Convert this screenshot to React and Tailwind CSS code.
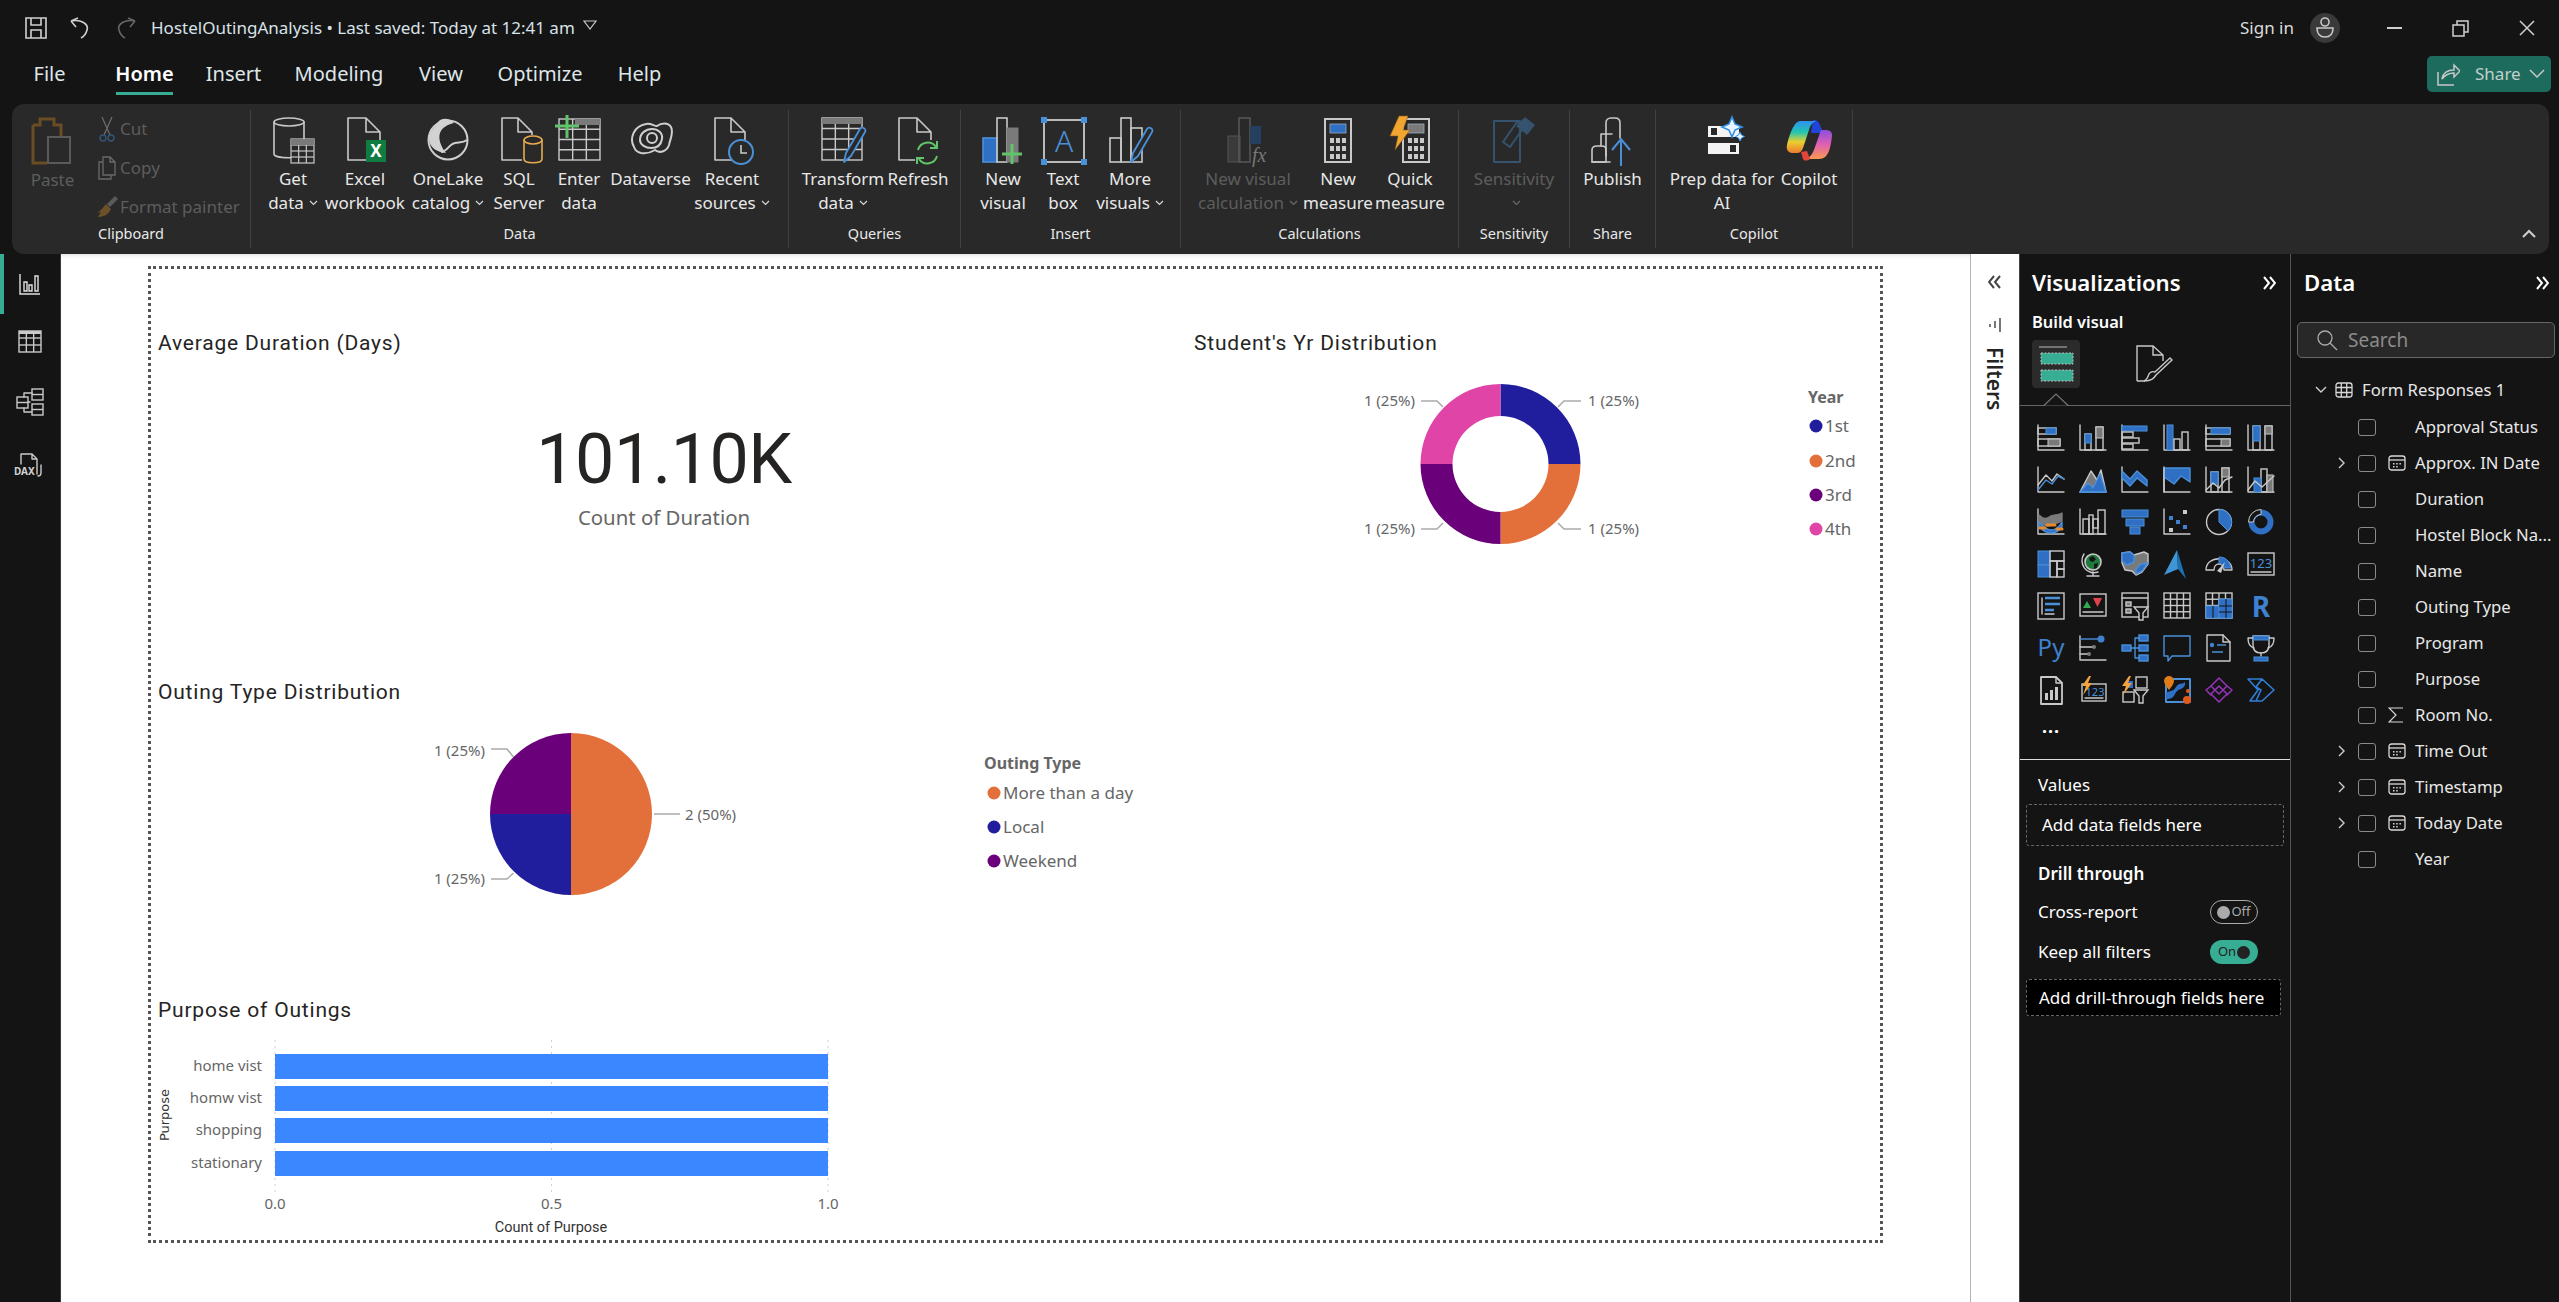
const gr = '#c9c9c9';
const bl = '#2f6fc4';
const bs = '#4a90d9';
const mid = '#7a7a7a';
const SANS = "font-['Noto_Sans',sans-serif]";

const R = ({ x, y, w, h, f = 'none', s = gr, sw = 1.4, r = 0 }) => (
  <rect x={x} y={y} width={w} height={h} rx={r} fill={f} stroke={s} strokeWidth={sw} />
);
const P = ({ d, f = 'none', s = gr, sw = 1.4 }) => (
  <path d={d} fill={f} stroke={s} strokeWidth={sw} strokeLinejoin="round" strokeLinecap="round" />
);
const Ax = () => <P d="M1 1V26H27" />;

// Grid pattern used by table-like icons
const Tbl = ({ x, y, w, h, cols = 3, rows = 3, s = gr, sw = 1.4 }) => (
  <g>
    <rect x={x} y={y} width={w} height={h} fill="none" stroke={s} strokeWidth={sw} />
    {Array.from({ length: cols - 1 }).map((_, i) => (
      <path key={i} d={`M${x + ((i + 1) * w) / cols} ${y}v${h}`} stroke={s} strokeWidth={sw} />
    ))}
    {Array.from({ length: rows - 1 }).map((_, i) => (
      <path key={i} d={`M${x} ${y + ((i + 1) * h) / rows}h${w}`} stroke={s} strokeWidth={sw} />
    ))}
  </g>
);

const vizIcons = [
  <><Ax /><R x={1} y={4} w={18} h={6} /><rect x={9} y={4} width={10} height={6} fill={bl} stroke={bs} /><R x={1} y={15} w={22} h={7} /><rect x={11} y={15} width={12} height={7} fill={mid} stroke={gr} /></>,
  <><Ax /><R x={6} y={10} w={6} h={16} /><rect x={6} y={10} width={6} height={9} fill={bl} stroke={bs} /><R x={17} y={3} w={7} h={23} /><rect x={17} y={3} width={7} height={11} fill={mid} stroke={gr} /></>,
  <><Ax /><rect x={1} y={2} width={25} height={5} fill={bl} stroke={bs} /><R x={1} y={8} w={11} h={5} /><R x={1} y={14} w={17} h={5} /><R x={1} y={20} w={11} h={5} /></>,
  <><Ax /><rect x={4} y={1} width={6} height={25} fill={bl} stroke={bs} /><R x={11} y={15} w={6} h={11} /><R x={19} y={8} w={6} h={18} /></>,
  <><Ax /><R x={1} y={4} w={24} h={6} /><rect x={6} y={4} width={19} height={6} fill={bl} stroke={bs} /><R x={1} y={15} w={24} h={7} /><rect x={16} y={15} width={9} height={7} fill={mid} stroke={gr} /></>,
  <><Ax /><R x={6} y={2} w={7} h={24} /><rect x={6} y={2} width={7} height={15} fill={bl} stroke={bs} /><R x={18} y={2} w={7} h={24} /><rect x={18} y={2} width={7} height={8} fill={mid} stroke={gr} /></>,

  <><P d="M1 1V26H27" /><P d="M1 19L9 9l6 6 5-7 7 5" /><P d="M1 24L9 14l6 4 6-8 6 3" s={bs} /></>,
  <><P d="M1 26L12 5l6 9 4-10 5 22z" f={mid} /><P d="M1 26l8-9 5 5 7-14 6 18z" f={bl} s={bs} /><P d="M1 26H27" s={bs} /></>,
  <><Ax /><P d="M1 5l8 8 7-8 10 9v6l-10-8-7 8-8-8z" f={bl} s={bs} /></>,
  <><Ax /><P d="M1 2h26v14l-9-6-7 8-10-7z" f={bl} s={bs} /><P d="M1 2V26" /></>,
  <><Ax /><R x={6} y={6} w={7} h={20} /><rect x={6} y={6} width={7} height={12} fill={bl} stroke={bs} /><R x={17} y={2} w={7} h={24} /><rect x={17} y={2} width={7} height={9} fill={mid} stroke={gr} /><P d="M1 24l7-7 6 5 6-8 7-3" /></>,
  <><Ax /><R x={14} y={3} w={6} h={23} /><rect x={7} y={12} width={7} height={14} fill={bl} stroke={bs} /><rect x={20} y={9} width={6} height={17} fill={mid} stroke={gr} /><P d="M1 24l7-9 7 6 12-11" /></>,

  <><Ax /><P d="M2 7c6 6 8 3 12 1s6 0 11-3v8c-5 3-7 2-11 4s-7 1-12-4z" f={mid} s={mid} /><P d="M2 14c5 6 8 8 12 8s8-3 11-8v5c-4 5-7 6-11 6s-9-3-12-7z" f={bl} s={bs} /><P d="M10 17h8" s="#e88a2c" sw={3} /><P d="M3 20h5M20 21h5" s="#e88a2c" sw={3} /></>,
  <><Ax /><R x={4} y={11} w={6} h={15} /><R x={10} y={7} w={4} h={19} /><R x={14} y={11} w={5} h={9} /><R x={19} y={2} w={7} h={24} /></>,
  <><rect x={1} y={2} width={26} height={7} fill={bl} stroke={bs} /><rect x={5} y={11} width={18} height={7} fill={bl} stroke={bs} /><rect x={9} y={19} width={10} height={7} fill={bl} stroke={bs} /></>,
  <><Ax /><rect x={6} y={8} width={4} height={4} fill="#3f80d0" /><rect x={13} y={12} width={4} height={4} fill="#3f80d0" /><rect x={20} y={17} width={4} height={4} fill="#3f80d0" /><rect x={20} y={2} width={4} height={4} fill={gr} /><rect x={6} y={20} width={4} height={4} fill={gr} /></>,
  <><circle cx={14} cy={14} r={12.5} fill="none" stroke={gr} strokeWidth={1.4} /><path d="M14 1.5A12.5 12.5 0 0 1 22.8 22.8L14 14z" fill={bl} stroke={bs} /></>,
  <><circle cx={14} cy={14} r={9.5} fill="none" stroke={bl} strokeWidth={6} /><path d="M1.5 14A12.5 12.5 0 0 1 14 1.5v5A7.5 7.5 0 0 0 6.5 14z" fill="#141414" stroke={gr} /></>,

  <><rect x={1} y={1} width={12} height={14} fill={bl} stroke={bs} /><rect x={1} y={15} width={12} height={12} fill={bl} stroke={bs} /><R x={13} y={1} w={14} h={10} /><R x={13} y={11} w={7} h={16} /><R x={20} y={11} w={7} h={8} /><R x={20} y={19} w={7} h={8} /></>,
  <><circle cx={14} cy={12} r={8} fill="#1f7a3d" stroke={gr} strokeWidth={1.6} /><path d="M10 8l4-2 3 3-3 3-3-1zM15 14l4-1-1 5-3 1z" fill="#141414" /><P d="M5 4a12 12 0 0 0 14 18M14 22v4M8 26h12" /></>,
  <><P d="M1 3l8-1 4 3 10-3 4 2v10l-6 8-6 3-4-4-7-1-3-7z" f={mid} /><P d="M1 3l8-1 4 3v7l-7 3-5-4z" f={bl} s={bs} /><P d="M15 19l5-5 7-1-6 8-6 3z" f={bl} s={bs} /></>,
  <><path d="M14 0L1 25l14-6z" fill="#3f96d6" /><path d="M14 0l9 29-8-10z" fill="#1d6fb0" /></>,
  <><P d="M1 20C1 5 27 5 27 20H19C19 12 9 12 9 20z" /><path d="M14 7c6 0 10 3 12 11h-7c-1-3-3-5-5-5z" fill={bl} stroke={bs} /><path d="M12 21l8-9-4 11z" fill={gr} /></>,
  <><R x={1} y={3} w={26} h={22} /><P d="M4 22h20" /><text x={14} y={18} textAnchor="middle" fontSize={13} fill={bs} className={SANS}>123</text></>,

  <><R x={1} y={1} w={26} h={26} /><P d="M5 6v16" /><path d="M8 6h15M8 12h15M8 18h9" stroke={bs} strokeWidth={2.4} /><P d="M8 22h9" /></>,
  <><R x={1} y={2} w={26} h={22} /><path d="M4 16l4-7 4 7z" fill="#35a853" /><path d="M14 6h9l-4.5 9z" fill="#e0444a" /><P d="M4 20h20" /></>,
  <><R x={1} y={1} w={26} h={24} /><P d="M1 6h26" /><R x={5} y={10} w={5} h={4} f={mid} /><R x={5} y={17} w={5} h={4} f={mid} /><path d="M13 15h14l-5 6v7h-4v-7z" fill="#141414" stroke={gr} strokeWidth={1.4} /></>,
  <Tbl x={1} y={1} w={26} h={25} cols={4} rows={4} />,
  <><Tbl x={1} y={1} w={26} h={25} cols={4} rows={4} /><rect x={1} y={14} width={26} height={12} fill={bl} stroke={bs} /><rect x={14} y={7} width={13} height={19} fill={bl} stroke={bs} /><path d="M8 14v12M14 20h13M21 7v19M14 14h13" stroke="#141414" /></>,
  <text x={14} y={25} textAnchor="middle" fontSize={28} fontWeight={700} fill="#3f80d0" className={SANS}>R</text>,

  <text x={14} y={22} textAnchor="middle" fontSize={24} fill="#3f80d0" className={SANS}>Py</text>,
  <><P d="M1 2V26H27" /><circle cx={22} cy={5} r={3.5} fill="#3f80d0" /><path d="M1 5h18" stroke={bs} strokeWidth={1.4} /><circle cx={15} cy={13} r={2} fill={mid} /><P d="M1 13h12" /><circle cx={10} cy={20} r={2} fill={mid} /><P d="M1 20h7" /></>,
  <><R x={1} y={11} w={9} h={6} f={bl} s={bs} /><R x={18} y={1} w={9} h={6} f={bl} s={bs} /><R x={18} y={11} w={9} h={6} f={bl} s={bs} /><R x={18} y={21} w={9} h={6} f={bl} s={bs} /><P d="M10 14h4M14 4v20M14 4h4M14 14h4M14 24h4" s={bs} /></>,
  <P d="M1 2h26v20H9l-4 5v-5H1z" s={bs} />,
  <><P d="M2 1h16l7 7v19H2z" /><P d="M18 1v7h7" /><circle cx={7} cy={11} r={2.2} fill="#3f80d0" /><path d="M12 11h9M7 18h11" stroke={bs} strokeWidth={1.4} /></>,
  <><P d="M6 2h16v9c0 5-3 8-8 8s-8-3-8-8z" /><rect x={6} y={2} width={16} height={4} fill={bl} stroke={bs} /><P d="M6 4H1c0 6 2 9 6 10M22 4h5c0 6-2 9-6 10M14 19v3" /><rect x={7} y={23} width={14} height={4} fill={bl} stroke={bs} /></>,

  <><P d="M4 1h15l6 6v21H4z" sw={1.8} /><P d="M19 1v6h6" /><path d="M8 17h3v7H8zM13 14h3v10h-3zM18 11h3v13h-3z" fill={gr} /></>,
  <><R x={3} y={8} w={24} h={17} /><P d="M6 22h18" /><text x={16} y={20} textAnchor="middle" fontSize={11} fill={bs} className={SANS}>123</text><path d="M10 0L3 10h4l-3 9 9-12H9l3-7z" fill="#f2a33a" /></>,
  <><R x={15} y={1} w={11} h={11} /><R x={2} y={16} w={11} h={10} /><rect x={6} y={5} width={6} height={7} fill={bl} /><path d="M13 14h14l-5 6v7h-4v-7z" fill="#141414" stroke={gr} strokeWidth={1.4} /><path d="M8 0L1 10h4l-3 9 9-12H7l3-7z" fill="#f2a33a" /></>,
  <><P d="M3 3h24v23H3z" s={bs} sw={2} /><path d="M3 17c5-3 7-1 10-6s7-2 9-5v3c-2 5-7 3-10 9s-6 4-9 6z" fill={bl} /><path d="M6 0a5 5 0 0 1 5 5c0 3-5 9-5 9s-5-6-5-9a5 5 0 0 1 5-5z" fill="#e07b1a" /><circle cx={24} cy={24} r={4} fill="#e05a1a" /><circle cx={25} cy={15} r={2} fill="#e05a1a" /></>,
  <><P d="M14 2l8 8-8 8-8-8zM14 10l8 8-8 8-8-8z" s="#9333b5" sw={1.6} /><P d="M6 10l-5 4 5 5M22 10l5 4-5 5" s="#9333b5" sw={1.6} /></>,
  <P d="M1 3h14l12 11-12 11H3l8-11L1 3zM15 3l-6 8 5 3-5 11" s="#2f7fd8" sw={1.6} />,
];

// 46x48 ribbon artwork
const Doc = ({ x = 3, w = 30, h = 44 }) => <P d={`M${x} 2H${x + w - 14}L${x + w} 16V${h}H${x}z M${x + w - 14} 2V16H${x + w}`} sw={1.6} />;
const Cyl = ({ x, y, w, h, s = gr }) => (
  <g>
    <P d={`M${x} ${y + 4}V${y + h - 4}C${x} ${y + h + 1} ${x + w} ${y + h + 1} ${x + w} ${y + h - 4}V${y + 4}`} s={s} sw={1.6} />
    <ellipse cx={x + w / 2} cy={y + 4} rx={w / 2} ry={4} fill="none" stroke={s} strokeWidth={1.6} />
  </g>
);
const Bars = ({ dim }) => {
  const c = dim ? '#5a5a5a' : gr;
  return (
    <g>
      <R x={3} y={22} w={11} h={24} s={c} sw={1.6} />
      <R x={14} y={2} w={10} h={44} s={c} sw={1.6} />
      <R x={24} y={12} w={11} h={34} s={c} sw={1.6} />
    </g>
  );
};
const Pencil = () => <P d="M24 46l2-9 14-24c2-3 7 0 5 3L31 40z" f="#292929" s="#4a90d9" sw={1.8} />;
const Bolt = ({ x = 0 }) => <path transform={`translate(${x} 0)`} d="M12 0h9l-5 14h7L8 34l3-14H3z" fill="#f0a630" stroke="#8a5a10" strokeWidth={0.6} />;
const Calc = ({ x = 8, top = '#2f6fc4', w = 26 }) => (
  <g>
    <R x={x} y={3} w={w} h={43} sw={2} />
    <rect x={x + 5} y={8} width={w - 10} height={9} fill={top} stroke="#9ab" strokeWidth={0.8} />
    {[22, 30, 38].map((y) => [0, 1, 2].map((c) => <rect key={`${y}${c}`} x={x + 5 + c * 6} y={y} width={4} height={5} fill={gr} />))}
  </g>
);

const ribbonIcons = {
  getData: <><Cyl x={4} y={2} w={30} h={40} /><rect x={21} y={23} width={23} height={24} fill="#292929" /><Tbl x={21} y={23} w={23} h={24} cols={3} rows={4} sw={1.2} /><rect x={21} y={23} width={23} height={6} fill={mid} /></>,
  excel: <><Doc x={6} w={32} /><rect x={24} y={24} width={20} height={22} fill="#107c41" /><text x={34} y={41} textAnchor="middle" fontSize={17} fontWeight={700} fill="#fff" className={SANS}>X</text></>,
  onelake: <><circle cx={23} cy={24} r={19.5} fill="none" stroke="#cfcfcf" strokeWidth={2} /><path d="M4 24C3 16 9 13 13 6c4-5 12-4 16 1-5 1-12 4-14 10-2 6 1 14 6 20C12 36 5 32 4 24z" fill="#d2d2d2" /><path d="M16 36c6 0 8-8 14-9 4-1 8 0 12-3" fill="none" stroke="#cfcfcf" strokeWidth={2} /></>,
  sql: <><Doc x={6} w={30} /><rect x={26} y={19} width={22} height={30} fill="#292929" /><Cyl x={28} y={20} w={18} h={27} s="#e8a950" /></>,
  enter: <><Tbl x={3} y={3} w={41} h={41} cols={3} rows={4} /><rect x={19} y={3} width={25} height={6} fill={mid} /><path d="M11 -1v23M-1 10h24" stroke="#62c46a" strokeWidth={3} /></>,
  dataverse: <><path d="M6 31C1 22 6 10 18 8c5-1 8 2 11 2 4-3 11-4 14 1 3 6-1 12-2 18-2 6-9 9-14 5-5 3-9 4-14 3-4-1-6-3-7-6z" fill="none" stroke="#cfcfcf" strokeWidth={2} /><path d="M12 24c0-7 6-11 12-11s11 4 10 10c-1 6-5 9-11 9-5 0-11-3-11-8z" fill="none" stroke="#cfcfcf" strokeWidth={2} /><ellipse cx={24} cy={22} rx={5} ry={5} fill="none" stroke="#cfcfcf" strokeWidth={2} /></>,
  recent: <><Doc x={6} w={30} /><circle cx={32} cy={36} r={12} fill="#292929" stroke="#4a90d9" strokeWidth={2} /><path d="M32 29v8h6" stroke={gr} strokeWidth={1.6} fill="none" /></>,
  transform: <><Tbl x={2} y={2} w={40} h={42} cols={3} rows={4} /><rect x={2} y={2} width={40} height={6} fill={mid} /><Pencil /></>,
  refresh: <><Doc x={4} w={32} /><rect x={20} y={24} width={24} height={24} fill="#292929" /><path d="M23 34a10 10 0 0 1 18-3M42 40a10 10 0 0 1-18 3" fill="none" stroke="#62c46a" strokeWidth={2} /><path d="M42 25v7h-7M22 48v-6h7" fill="none" stroke="#62c46a" strokeWidth={2} /></>,
  newVisual: <><rect x={3} y={22} width={14} height={24} fill={bl} stroke={bs} strokeWidth={1.6} /><R x={17} y={2} w={10} h={44} sw={1.6} /><rect x={27} y={12} width={11} height={34} fill={mid} stroke={mid} /><path d="M32 28v20M22 38h20" stroke="#62c46a" strokeWidth={3} /></>,
  textBox: <><R x={4} y={4} w={40} h={42} sw={1.8} /><g fill="#4a90d9"><rect x={1} y={1} width={6} height={6} /><rect x={41} y={1} width={6} height={6} /><rect x={1} y={43} width={6} height={6} /><rect x={41} y={43} width={6} height={6} /></g><text x={24} y={36} textAnchor="middle" fontSize={30} fill="#4a90d9" fontWeight={300} className={SANS}>A</text></>,
  moreVisuals: <><Bars /><Pencil /></>,
  newCalc: <><rect x={3} y={20} width={12} height={26} fill="#3a3a3a" stroke="#555" /><R x={14} y={2} w={11} h={44} s="#555" sw={1.6} /><rect x={25} y={10} width={11} height={18} fill="#243f60" /><text x={27} y={46} fontSize={20} fontStyle="italic" fill="#777" style={{ fontFamily: 'Liberation Serif, serif' }}>fx</text></>,
  newMeasure: <Calc x={10} />,
  quickMeasure: <><Calc x={16} top={mid} /><Bolt x={0} /></>,
  sensitivity: <><P d="M3 5h26v41H3z" s="#35536f" sw={2} /><P d="M12 26l14-20 7 5-14 20z" s="#35536f" sw={2} /><P d="M26 10l8-8 9 7-7 9z" f="#35536f" s="#35536f" /></>,
  publish: <><P d="M16 40V7c0-3 2-5 5-5h4c3 0 5 2 5 5v15" sw={1.6} /><P d="M11 30V18h11" sw={1.6} /><P d="M2 46V34c0-3 2-4 5-4h5c2 0 4 1 4 4v12z" sw={1.6} /><P d="M2 46h18" sw={1.6} /><path d="M31 50V24M22 34l9-11 9 11" fill="none" stroke="#4a90d9" strokeWidth={2} /></>,
  prep: <><rect x={9} y={10} width={31} height={11} fill="#f4f4f4" /><rect x={12} y={12} width={6} height={7} fill="#292929" /><rect x={9} y={27} width={31} height={11} fill="#f4f4f4" /><rect x={31} y={29} width={6} height={7} fill="#292929" /><path d="M33 1l3 7 7 3-7 3-3 7-3-7-7-3 7-3z" fill="#e8f4ff" stroke="#2f8fe8" strokeWidth={1.6} /><path d="M41 16l1.5 3 3 1.5-3 1.5-1.5 3-1.5-3-3-1.5 3-1.5z" fill="#e8f4ff" stroke="#2f8fe8" strokeWidth={1} /></>,
  copilot: (
    <>
      <defs>
        <linearGradient id="cpA" x1="0" y1="0" x2="0" y2="1"><stop offset="0" stopColor="#2f8ff0" /><stop offset="0.35" stopColor="#22c6b0" /><stop offset="0.65" stopColor="#e8d030" /><stop offset="1" stopColor="#ee7a30" /></linearGradient>
        <linearGradient id="cpB" x1="0" y1="0" x2="0" y2="1"><stop offset="0" stopColor="#8a4fe0" /><stop offset="0.5" stopColor="#e060b0" /><stop offset="1" stopColor="#f89a50" /></linearGradient>
      </defs>
      <path d="M27 4c4 0 6 2 7 5l3 8H25z" fill="#2344d8" />
      <path d="M18 43h15c5 0 8-3 10-8 2-6 3-14 3-16 0-4-3-5-7-5h-4l-6 17c-2 6-5 12-11 12z" fill="url(#cpB)" />
      <path d="M15 36l2 7c1 2 5 2 7 0l-3-8z" fill="#e0463a" />
      <path d="M14 5h17c-5 1-7 5-8 9l-6 18c-1 3-3 5-6 5H6c-4 0-6-4-5-8C3 20 8 5 14 5z" fill="url(#cpA)" />
    </>
  ),
};

const Caret = ({ dim }) => (
  <svg width="9" height="6" viewBox="0 0 9 6" className="inline-block ml-[5px] mb-[2px]">
    <path d="M1 1l3.5 3.5L8 1" fill="none" stroke={dim ? '#6a6a6a' : '#d8d8d8'} strokeWidth="1.2" />
  </svg>
);

const RibbonItem = ({ width, icon, lines, caret, dim, iconW = 46 }) => (
  <div style={{ width }} className="flex flex-col items-center shrink-0">
    <div className="h-[51px] flex items-start justify-center">
      {icon && (
        <svg width={iconW} height="50" viewBox="0 0 46 50" className="overflow-visible">
          {icon}
        </svg>
      )}
    </div>
    <div className={`text-[17px] leading-[24px] text-center whitespace-nowrap ${dim ? 'text-[#5d5d5d]' : 'text-[#e8e8e8]'}`}>
      {lines.map((l, i) => (
        <div key={i} className="h-[24px]">
          {l}
          {caret && i === lines.length - 1 && <Caret dim={dim} />}
        </div>
      ))}
    </div>
  </div>
);

const RibbonGroup = ({ width, label, pl = 0, children, last }) => (
  <div style={{ width }} className={`shrink-0 h-[138px] my-[6px] flex flex-col ${last ? '' : 'border-r border-[#414141]'}`}>
    <div className="flex h-[113px] pt-[6px]" style={{ paddingLeft: pl }}>
      {children}
    </div>
    <div className="text-center text-[14.5px] leading-[20px] text-[#e8e8e8]">{label}</div>
  </div>
);

const TopBar = () => (
  <div className="h-[56px] flex items-center shrink-0 text-[#dcdcdc]">
    <svg width="24" height="24" viewBox="0 0 24 24" className="ml-[24px]">
      <path d="M2 2h20v20H2zM7 2v7h10V2M7 22v-8h10v8" fill="none" stroke="#d0d0d0" strokeWidth="1.6" />
    </svg>
    <svg width="24" height="24" viewBox="0 0 24 24" className="ml-[21px]">
      <path d="M2 5l7-3M2 5l5 6M2 5c10-2 18 3 16 9-1 4-4 7-6 8" fill="none" stroke="#d0d0d0" strokeWidth="1.6" />
    </svg>
    <svg width="24" height="24" viewBox="0 0 24 24" className="ml-[20px]">
      <path d="M22 5l-7-3M22 5l-5 6M22 5C12 3 4 8 6 14c1 4 4 7 6 8" fill="none" stroke="#666" strokeWidth="1.6" />
    </svg>
    <div className="ml-[14px] text-[17px] text-[#d8e2e8]">HostelOutingAnalysis • Last saved: Today at 12:41 am</div>
    <svg width="14" height="10" viewBox="0 0 14 10" className="ml-[8px] mb-[6px]">
      <path d="M1 1h12L7 9z" fill="none" stroke="#c8c8c8" strokeWidth="1.2" />
    </svg>
    <div className="ml-auto text-[17px]">Sign in</div>
    <div className="ml-[16px] w-[30px] h-[30px] rounded-full bg-[#3a3a3a] flex items-center justify-center">
      <svg width="20" height="24" viewBox="0 0 20 24">
        <circle cx="10" cy="6" r="4" fill="none" stroke="#c8c8c8" strokeWidth="1.6" />
        <path d="M2 12h16c0 6-3 9-8 9s-8-3-8-9z" fill="none" stroke="#c8c8c8" strokeWidth="1.6" />
      </svg>
    </div>
    <div className="ml-[47px] w-[15px] h-[1.5px] bg-[#d0d0d0]" />
    <svg width="17" height="18" viewBox="0 0 17 18" className="ml-[50px]">
      <path d="M1 6h11v11H1zM5 6V2h11v11h-4" fill="none" stroke="#d0d0d0" strokeWidth="1.5" />
    </svg>
    <svg width="16" height="16" viewBox="0 0 16 16" className="ml-[50px] mr-[24px]">
      <path d="M1 1l14 14M15 1L1 15" stroke="#d0d0d0" strokeWidth="1.5" />
    </svg>
  </div>
);

const TabRow = () => (
  <div className="h-[48px] flex items-start shrink-0 pl-[34px] pr-[8px]">
    {[['File', 31, 51], ['Home', 57, 35], ['Insert', 51, 36], ['Modeling', 88, 36], ['View', 44, 35], ['Optimize', 84, 36], ['Help', 43, 0]].map(([t, w, mr]) => (
      <div
        key={t}
        style={{ width: w, marginRight: mr }}
        className={`h-[39px] flex items-center justify-center text-[20px] whitespace-nowrap border-b-[3px] ${t === 'Home' ? 'border-[#37ad93] text-white font-semibold' : 'border-transparent text-[#dfe6ea]'}`}
      >
        {t}
      </div>
    ))}
    <div className="ml-auto w-[124px] h-[36px] rounded-[5px] bg-[#1d6b5d] flex items-center pl-[9px] text-[17px] text-[#c4cfcc]">
      <svg width="24" height="26" viewBox="0 0 24 26">
        <path d="M2 11v13h16M6 18c1-6 5-9 12-9V4l6 6-6 6v-4c-5 0-9 2-12 6z" fill="none" stroke="#c8c8c8" strokeWidth="1.5" />
      </svg>
      <span className="ml-[15px]">Share</span>
      <svg width="16" height="10" viewBox="0 0 16 10" className="ml-[8px]">
        <path d="M1 1l7 7 7-7" fill="none" stroke="#c8c8c8" strokeWidth="1.5" />
      </svg>
    </div>
  </div>
);

const SmallClip = ({ label, icon }) => (
  <div className="flex items-center h-[39px] text-[17px] text-[#5d5d5d] whitespace-nowrap">
    <span className="w-[27px] flex justify-center">{icon}</span>
    {label}
  </div>
);

const Ribbon = () => (
  <div className="h-[150px] ml-3 mr-[10px] shrink-0 rounded-xl bg-[#292929] flex">
    <RibbonGroup width={239} label="Clipboard">
      <div className="w-[81px] flex flex-col items-center -mt-[4px]">
        <svg width="46" height="52" viewBox="0 0 46 52" className="mt-[4px]">
          <path d="M3 9h7V3h14v6h7v12M3 9v38h14" fill="none" stroke="#6a4d25" strokeWidth="3" />
          <rect x="18" y="21" width="22" height="26" fill="#292929" stroke="#5a5a5a" strokeWidth="2" />
        </svg>
        <div className="text-[17px] text-[#5d5d5d] leading-[24px]">Paste</div>
      </div>
      <div className="-mt-[7px]">
        <SmallClip label="Cut" icon={<svg width="16" height="26" viewBox="0 0 16 26"><path d="M3 1l8 18M13 1L5 19" stroke="#707070" strokeWidth="1.2" /><circle cx="4" cy="22" r="3" fill="none" stroke="#34557a" strokeWidth="1.4" /><circle cx="12" cy="22" r="3" fill="none" stroke="#34557a" strokeWidth="1.4" /></svg>} />
        <SmallClip label="Copy" icon={<svg width="18" height="24" viewBox="0 0 18 24"><path d="M5 6H1v17h12v-4M5 1h7l5 5v13H5zM12 1v5h5" fill="none" stroke="#6a6a6a" strokeWidth="1.3" /></svg>} />
        <SmallClip label="Format painter" icon={<svg width="24" height="24" viewBox="0 0 24 24"><path d="M20 1l3 3-8 8-3-3z" fill="#5a5a5a" /><path d="M11 9l5 5c-2 5-7 8-13 8l3-5-4 1c3-2 6-5 9-9z" fill="#6a5128" /></svg>} />
      </div>
    </RibbonGroup>
    <RibbonGroup width={538} label="Data" pl={10}>
      <RibbonItem width={64} icon={ribbonIcons.getData} lines={['Get', 'data']} caret />
      <RibbonItem width={80} icon={ribbonIcons.excel} lines={['Excel', 'workbook']} />
      <RibbonItem width={86} icon={ribbonIcons.onelake} lines={['OneLake', 'catalog']} caret />
      <RibbonItem width={56} icon={ribbonIcons.sql} lines={['SQL', 'Server']} />
      <RibbonItem width={64} icon={ribbonIcons.enter} lines={['Enter', 'data']} />
      <RibbonItem width={79} icon={ribbonIcons.dataverse} lines={['Dataverse']} />
      <RibbonItem width={84} icon={ribbonIcons.recent} lines={['Recent', 'sources']} caret />
    </RibbonGroup>
    <RibbonGroup width={172} label="Queries" pl={8}>
      <RibbonItem width={92} icon={ribbonIcons.transform} lines={['Transform', 'data']} caret />
      <RibbonItem width={58} icon={ribbonIcons.refresh} lines={['Refresh']} />
    </RibbonGroup>
    <RibbonGroup width={220} label="Insert" pl={12}>
      <RibbonItem width={60} icon={ribbonIcons.newVisual} lines={['New', 'visual']} />
      <RibbonItem width={60} icon={ribbonIcons.textBox} lines={['Text', 'box']} />
      <RibbonItem width={74} icon={ribbonIcons.moreVisuals} lines={['More', 'visuals']} caret />
    </RibbonGroup>
    <RibbonGroup width={278} label="Calculations" pl={12}>
      <RibbonItem width={110} icon={ribbonIcons.newCalc} lines={['New visual', 'calculation']} caret dim />
      <RibbonItem width={70} icon={ribbonIcons.newMeasure} lines={['New', 'measure']} />
      <RibbonItem width={74} icon={ribbonIcons.quickMeasure} lines={['Quick', 'measure']} />
    </RibbonGroup>
    <RibbonGroup width={111} label="Sensitivity">
      <RibbonItem width={110} icon={ribbonIcons.sensitivity} lines={['Sensitivity', '']} caret dim />
    </RibbonGroup>
    <RibbonGroup width={86} label="Share">
      <RibbonItem width={85} icon={ribbonIcons.publish} lines={['Publish']} />
    </RibbonGroup>
    <RibbonGroup width={197} label="Copilot" pl={8}>
      <RibbonItem width={116} icon={ribbonIcons.prep} lines={['Prep data for', 'AI']} />
      <RibbonItem width={58} icon={ribbonIcons.copilot} lines={['Copilot']} />
    </RibbonGroup>
    <svg width="16" height="10" viewBox="0 0 16 10" className="ml-auto self-end mb-[15px] mr-[12px]">
      <path d="M2 8l6-6 6 6" fill="none" stroke="#d0d0d0" strokeWidth="2" />
    </svg>
  </div>
);

const Rail = () => (
  <div className="w-[61px] shrink-0 relative flex flex-col items-center pt-[19px] gap-[35px] border-r border-[#3a3a3a]">
    <div className="absolute left-0 top-0 w-[4px] h-[60px] bg-[#37ad93]" />
    <svg width="22" height="22" viewBox="0 0 22 22"><path d="M1 1v20h20" fill="none" stroke="#e0e0e0" strokeWidth="1.4" /><path d="M5 9h3v9H5zM10 12h3v6h-3zM16 3h3v15h-3z" fill="none" stroke="#e0e0e0" strokeWidth="1.4" /></svg>
    <svg width="24" height="23" viewBox="0 0 24 23"><Tbl x={1} y={1} w={22} h={21} cols={3} rows={3} /><rect x={1} y={1} width={22} height={3} fill={gr} /></svg>
    <svg width="28" height="28" viewBox="0 0 28 28"><Tbl x={1} y={9} w={11} h={11} cols={1} rows={2} /><Tbl x={16} y={1} w={11} h={11} cols={1} rows={2} /><Tbl x={16} y={16} w={11} h={11} cols={1} rows={2} /><P d="M12 14h2M8 9V5h8M8 20v4h8" /></svg>
    <svg width="28" height="26" viewBox="0 0 28 26" className="mr-[4px]">
      <P d="M7 13V3h11l5 5v15M18 3v5h5M27 14v8c0 2-1 3-3 3" />
      <text x={0} y={24} fontSize={10} fontWeight={700} fill="#d0d0d0" className={SANS}>DAX</text>
    </svg>
  </div>
);

const TITLE = "font-['Roboto',sans-serif] text-[21px] leading-[28px] tracking-[0.8px] text-[#252423]";
const LBL = '#666666';

const Leader = ({ d }) => <path d={d} fill="none" stroke="#aaaaaa" strokeWidth="1.5" />;
const DataLabel = ({ x, y, children, anchor = 'start' }) => (
  <text x={x} y={y} textAnchor={anchor} dominantBaseline="middle" fontSize="15" fill={LBL} className={SANS}>{children}</text>
);
const LegendItem = ({ x, y, color, children }) => (
  <g>
    <circle cx={x} cy={y} r="6.5" fill={color} />
    <text x={x + 9} y={y + 1} dominantBaseline="middle" fontSize="17" fill={LBL} className={SANS}>{children}</text>
  </g>
);

const Purple = '#6b007b';
const Navy = '#201e9c';
const Orange = '#e36f3a';
const Pink = '#e044a7';

const YearDonut = () => (
  <svg width="690" height="290" viewBox="1187 357 690 290">
    <path d="M1500.5 384a80 80 0 0 1 80 80h-32a48 48 0 0 0-48-48z" fill={Navy} />
    <path d="M1580.5 464a80 80 0 0 1-80 80v-32a48 48 0 0 0 48-48z" fill={Orange} />
    <path d="M1500.5 544a80 80 0 0 1-80-80h32a48 48 0 0 0 48 48z" fill={Purple} />
    <path d="M1420.5 464a80 80 0 0 1 80-80v32a48 48 0 0 0-48 48z" fill={Pink} />
    <Leader d="M1558 407l6-6h17" />
    <Leader d="M1443 407l-6-6h-16" />
    <Leader d="M1558 523l6 6h17" />
    <Leader d="M1443 523l-6 6h-16" />
    <DataLabel x={1588} y={402}>1 (25%)</DataLabel>
    <DataLabel x={1415} y={402} anchor="end">1 (25%)</DataLabel>
    <DataLabel x={1588} y={530}>1 (25%)</DataLabel>
    <DataLabel x={1415} y={530} anchor="end">1 (25%)</DataLabel>
    <text x={1808} y={399} dominantBaseline="middle" fontSize="16" fontWeight="700" fill={LBL} className={SANS}>Year</text>
    <LegendItem x={1816} y={426} color={Navy}>1st</LegendItem>
    <LegendItem x={1816} y={461} color={Orange}>2nd</LegendItem>
    <LegendItem x={1816} y={495} color={Purple}>3rd</LegendItem>
    <LegendItem x={1816} y={529} color={Pink}>4th</LegendItem>
  </svg>
);

const OutingPie = () => (
  <svg width="1100" height="250" viewBox="151 706 1100 250">
    <path d="M571 733a81 81 0 0 1 0 162z" fill={Orange} />
    <path d="M571 814v81a81 81 0 0 1-81-81z" fill={Navy} />
    <path d="M571 814h-81a81 81 0 0 1 81-81z" fill={Purple} />
    <Leader d="M654 814h26" />
    <Leader d="M513.5 757l-6.5-8h-16" />
    <Leader d="M513.5 873l-6.5 6h-16" />
    <DataLabel x={685} y={816}>2 (50%)</DataLabel>
    <DataLabel x={485} y={752} anchor="end">1 (25%)</DataLabel>
    <DataLabel x={485} y={880} anchor="end">1 (25%)</DataLabel>
    <text x={984} y={765} dominantBaseline="middle" fontSize="16" fontWeight="700" fill={LBL} className={SANS}>Outing Type</text>
    <LegendItem x={994} y={793} color={Orange}>More than a day</LegendItem>
    <LegendItem x={994} y={827} color={Navy}>Local</LegendItem>
    <LegendItem x={994} y={861} color={Purple}>Weekend</LegendItem>
  </svg>
);

const PurposeBars = () => (
  <svg width="720" height="216" viewBox="151 1024 720 216">
    {[275, 551.5, 828].map((x) => (
      <path key={x} d={`M${x} 1040V1192`} stroke="#d0d0d0" strokeWidth="1" strokeDasharray="2 4" />
    ))}
    {[[1054, 'home vist'], [1086, 'homw vist'], [1118, 'shopping'], [1151, 'stationary']].map(([y, t]) => (
      <g key={t}>
        <rect x="275" y={y} width="553" height="25" fill="#3a87ff" />
        <text x="262" y={y + 13} textAnchor="end" dominantBaseline="middle" fontSize="15" fill={LBL} className={SANS}>{t}</text>
      </g>
    ))}
    {[[275, '0.0'], [551.5, '0.5'], [828, '1.0']].map(([x, t]) => (
      <text key={t} x={x} y={1205} textAnchor="middle" dominantBaseline="middle" fontSize="15" fill={LBL} className={SANS}>{t}</text>
    ))}
    <text x="551" y="1228" textAnchor="middle" dominantBaseline="middle" fontSize="14.5" fill="#333" className="font-['Roboto',sans-serif]">Count of Purpose</text>
    <text x="0" y="0" transform="translate(165 1115) rotate(-90)" textAnchor="middle" dominantBaseline="middle" fontSize="13" fill="#333" className="font-['DejaVu_Sans',sans-serif]">Purpose</text>
  </svg>
);

const Canvas = () => (
  <div className="w-[1909px] shrink-0 bg-white pl-[87px] pt-[12px] shadow-[inset_0_4px_4px_-3px_rgba(0,0,0,0.15)]">
    <div className="w-[1735px] h-[977px] border-[3px] border-dotted border-[#555] pt-[60px]">
      <div className="flex h-[349px]">
        <div className="w-[1036px] pl-[7px]">
          <div className={TITLE}>Average Duration (Days)</div>
          <div className="w-[1012px] text-center mt-[62px]">
            <div className="font-['Roboto',sans-serif] text-[70px] leading-[80px] tracking-[-0.5px] text-[#252423]">101.10K</div>
            <div className="text-[20.4px] leading-[28px] text-[#666] mt-[4px]">Count of Duration</div>
          </div>
        </div>
        <div>
          <div className={`${TITLE} pl-[7px]`}>Student's Yr Distribution</div>
          <YearDonut />
        </div>
      </div>
      <div className="h-[318px]">
        <div className={`${TITLE} pl-[7px]`}>Outing Type Distribution</div>
        <OutingPie />
      </div>
      <div>
        <div className={`${TITLE} pl-[7px]`}>Purpose of Outings</div>
        <PurposeBars />
      </div>
    </div>
  </div>
);

const FilterStrip = () => (
  <div className="w-[49px] shrink-0 bg-white border-l border-[#b5b5b5] flex flex-col items-center pt-[21px] text-[#252423]">
    <svg width="14" height="14" viewBox="0 0 14 14"><path d="M6 1L1 7l5 6M12 1L7 7l5 6" fill="none" stroke="#444" strokeWidth="2" /></svg>
    <svg width="12" height="14" viewBox="0 0 12 14" className="mt-[29px]"><path d="M1 6v3M6 3v7M11 0v14" stroke="#555" strokeWidth="1.6" /></svg>
    <div className="[writing-mode:vertical-rl] text-[21px] font-semibold mt-[15px] leading-[24px]">Filters</div>
  </div>
);

const Toggle = ({ on }) => (
  <div className={`w-[48px] h-[24px] rounded-full flex items-center justify-center gap-[1px] text-[13px] ${on ? 'bg-[#37ad93] text-[#222]' : 'border border-[#aaa] text-[#aaa]'}`}>
    {on ? (
      <>
        <span>On</span>
        <span className="w-[13px] h-[13px] rounded-full bg-[#222]" />
      </>
    ) : (
      <>
        <span className="w-[13px] h-[13px] rounded-full bg-[#aaa]" />
        <span>Off</span>
      </>
    )}
  </div>
);

const DoubleChevron = () => (
  <svg width="14" height="14" viewBox="0 0 14 14"><path d="M2 1l5 6-5 6M8 1l5 6-5 6" fill="none" stroke="#fff" strokeWidth="2" /></svg>
);

const VizPane = () => (
  <div className="w-[271px] shrink-0 border-l border-[#444] text-white flex flex-col text-[17px]">
    <div className="flex items-center justify-between h-[58px] pl-[12px] pr-[14px]">
      <span className="text-[22.2px] font-semibold">Visualizations</span>
      <DoubleChevron />
    </div>
    <div className="pl-[12px] text-[16.4px] font-semibold leading-[20px]">Build visual</div>
    <div className="flex items-center pl-[12px] mt-[8px] h-[48px]">
      <div className="w-[48px] h-[48px] rounded bg-[#2b2b2b] flex items-center justify-center">
        <svg width="36" height="38" viewBox="0 0 36 38">
          <path d="M1 2h28" stroke="#bbb" strokeWidth="1" />
          <rect x="3" y="8" width="32" height="11" fill="#37ad93" stroke="#bbb" strokeDasharray="2 1.5" />
          <rect x="3" y="25" width="32" height="11" fill="#37ad93" stroke="#bbb" strokeDasharray="2 1.5" />
        </svg>
      </div>
      <svg width="38" height="38" viewBox="0 0 38 38" className="ml-[56px]">
        <path d="M1 36V1h16l10 9v6M1 36h8M17 1v9h10" fill="none" stroke="#c8c8c8" strokeWidth="1.4" />
        <path d="M36 15L20 30c-2 3-4 6-12 6 3-1 4-4 5-7 1-2 4-3 6-2L34 13z" fill="none" stroke="#c8c8c8" strokeWidth="1.4" />
      </svg>
    </div>
    <div className="h-[18px] relative border-b border-[#666]">
      <svg width="26" height="13" viewBox="0 0 26 13" className="absolute left-[23px] bottom-[-1px]">
        <path d="M0 12.5h1L13 1l12 11.5h1" fill="#141414" stroke="#777" strokeWidth="1.2" />
      </svg>
    </div>
    <div className="grid grid-cols-6 pl-[10px] pt-[11px] auto-rows-[42px] w-[262px]">
      {vizIcons.map((icon, i) => (
        <div key={i} className="flex items-center justify-center">
          <svg width="28" height="28" viewBox="0 0 28 28" className="overflow-visible">{icon}</svg>
        </div>
      ))}
      <div className="flex items-center justify-center text-[18px] font-bold leading-none tracking-[1px] pb-[12px]">...</div>
    </div>
    <div className="mt-[6px] border-b border-[#ddd]" />
    <div className="pl-[18px] mt-[14px] text-[17px] leading-[22px]">Values</div>
    <div className="mx-[6px] mt-[8px] h-[42px] border border-dashed border-[#666] rounded-[3px] flex items-center pl-[15px] text-[17px]">Add data fields here</div>
    <div className="pl-[18px] mt-[17px] text-[17px] font-semibold leading-[22px]">Drill through</div>
    <div className="pl-[18px] pr-[32px] mt-[15px] flex items-center justify-between text-[17px] h-[24px]">
      <span>Cross-report</span>
      <Toggle />
    </div>
    <div className="pl-[18px] pr-[32px] mt-[16px] flex items-center justify-between text-[17px] h-[24px]">
      <span>Keep all filters</span>
      <Toggle on />
    </div>
    <div className="ml-[6px] mr-[9px] mt-[15px] h-[37px] border border-dashed border-[#666] rounded-[3px] bg-black flex items-center pl-[12px] text-[17px] whitespace-nowrap">Add drill-through fields here</div>
  </div>
);

const fields = [
  ['Approval Status'],
  ['Approx. IN Date', 'date'],
  ['Duration'],
  ['Hostel Block Na...'],
  ['Name'],
  ['Outing Type'],
  ['Program'],
  ['Purpose'],
  ['Room No.', 'sum'],
  ['Time Out', 'date'],
  ['Timestamp', 'date'],
  ['Today Date', 'date'],
  ['Year'],
];

const FieldRow = ({ name, kind }) => (
  <div className="h-[36px] flex items-center">
    <span className="w-[13px] ml-[47px] shrink-0">
      {kind === 'date' && (
        <svg width="8" height="12" viewBox="0 0 8 12"><path d="M1 1l5 5-5 5" fill="none" stroke="#d0d0d0" strokeWidth="1.4" /></svg>
      )}
    </span>
    <span className="w-[18px] h-[17px] ml-[7px] rounded-[3px] border border-[#8a8a8a] shrink-0" />
    <span className="w-[19px] ml-[12px] shrink-0">
      {kind === 'date' && (
        <svg width="18" height="16" viewBox="0 0 18 16"><rect x="1" y="1" width="16" height="14" rx="2.5" fill="none" stroke="#d8d8d8" strokeWidth="1.3" /><path d="M1 5h16" stroke="#d8d8d8" strokeWidth="1.3" /><path d="M5 8h1.5v1.5H5zM8.2 8h1.5v1.5H8.2zM11.4 8h1.5v1.5h-1.5zM5 11h1.5v1.5H5zM8.2 11h1.5v1.5H8.2z" fill="#d8d8d8" /></svg>
      )}
      {kind === 'sum' && (
        <svg width="16" height="16" viewBox="0 0 16 16"><path d="M15 1H1l7 7-7 7h14" fill="none" stroke="#d8d8d8" strokeWidth="1.2" /></svg>
      )}
    </span>
    <span className="ml-[8px] whitespace-nowrap">{name}</span>
  </div>
);

const DataPane = () => (
  <div className="flex-1 min-w-0 border-l border-[#555] text-[#e8e8e8] flex flex-col text-[16.7px]">
    <div className="flex items-center justify-between h-[58px] pl-[13px] pr-[10px]">
      <span className="text-[22.2px] font-semibold text-white">Data</span>
      <DoubleChevron />
    </div>
    <div className="ml-[6px] mr-[4px] mt-[10px] h-[36px] rounded-[5px] border border-[#666] bg-[#282828] flex items-center pl-[18px] text-[#8c8c8c] text-[19px]">
      <svg width="22" height="22" viewBox="0 0 22 22"><circle cx="9" cy="9" r="7" fill="none" stroke="#aaa" strokeWidth="1.3" /><path d="M14 14l7 7" stroke="#aaa" strokeWidth="1.3" /></svg>
      <span className="ml-[10px]">Search</span>
    </div>
    <div className="h-[36px] mt-[14px] flex items-center">
      <svg width="12" height="8" viewBox="0 0 12 8" className="ml-[24px]"><path d="M1 1l5 5 5-5" fill="none" stroke="#d0d0d0" strokeWidth="1.4" /></svg>
      <svg width="18" height="16" viewBox="0 0 18 16" className="ml-[8px]"><rect x="1" y="1" width="16" height="14" rx="2.5" fill="none" stroke="#d8d8d8" strokeWidth="1.3" /><path d="M1 5.5h16M1 10.5h16M6.3 1v14M11.7 1v14" stroke="#d8d8d8" strokeWidth="1.3" /></svg>
      <span className="ml-[9px]">Form Responses 1</span>
    </div>
    <div className="mt-[1px]">
      {fields.map(([name, kind]) => (
        <FieldRow key={name} name={name} kind={kind} />
      ))}
    </div>
  </div>
);

export default function App() {
  return (
    <div className={`w-screen h-screen overflow-hidden bg-[#141414] flex flex-col ${SANS}`}>
      <TopBar />
      <TabRow />
      <Ribbon />
      <div className="flex-1 flex min-h-0">
        <Rail />
        <Canvas />
        <FilterStrip />
        <VizPane />
        <DataPane />
      </div>
    </div>
  );
}
